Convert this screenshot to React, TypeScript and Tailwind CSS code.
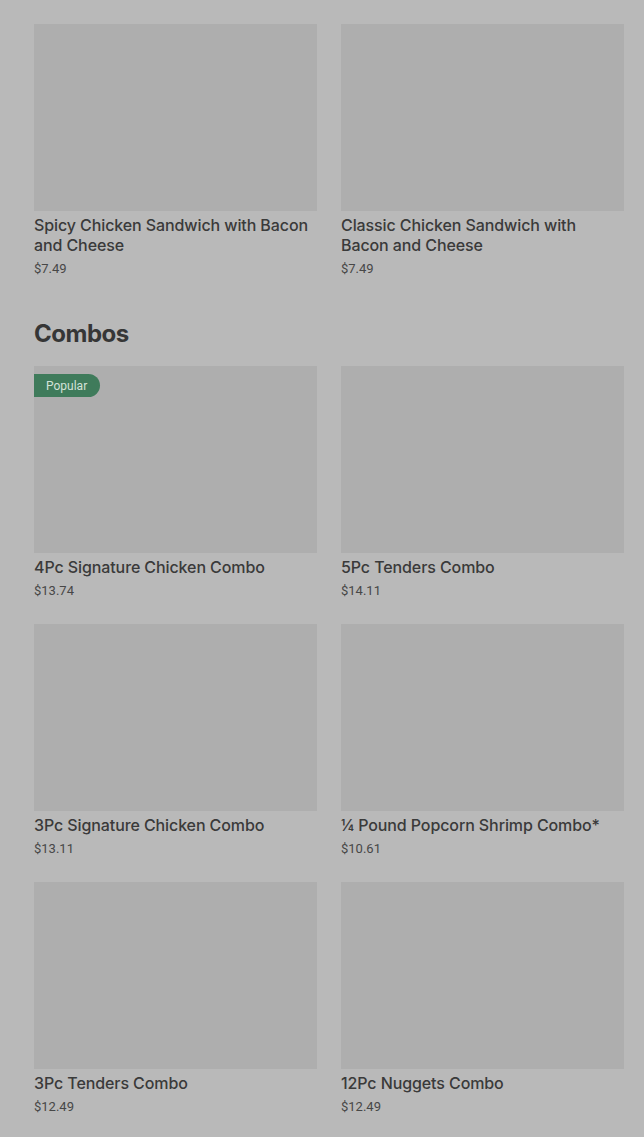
import React from 'react';

interface Item {
  name: string;
  price: string;
  popular?: boolean;
}

const sandwiches: Item[] = [
  { name: 'Spicy Chicken Sandwich with Bacon and Cheese', price: '$7.49' },
  { name: 'Classic Chicken Sandwich with Bacon and Cheese', price: '$7.49' },
];

const combos: Item[] = [
  { name: '4Pc Signature Chicken Combo', price: '$13.74', popular: true },
  { name: '5Pc Tenders Combo', price: '$14.11' },
  { name: '3Pc Signature Chicken Combo', price: '$13.11' },
  { name: '¼ Pound Popcorn Shrimp Combo*', price: '$10.61' },
  { name: '3Pc Tenders Combo', price: '$12.49' },
  { name: '12Pc Nuggets Combo', price: '$12.49' },
];

const MenuCard: React.FC<{ item: Item }> = ({ item }) => (
  <div className="flex flex-col">
    <div className="relative h-[187px] w-full bg-[#aeaeae]">
      {item.popular && (
        <span className="absolute left-0 top-[8px] h-[23px] flex items-center pl-[12px] pr-[13px] rounded-r-full bg-[#3f7b5b] text-[12px] text-[#d3e2d9]">
          Popular
        </span>
      )}
    </div>
    <p
      className="mt-[4px] text-[16px] leading-5 font-medium tracking-[-0.1px] text-[#3a3a3a]"
      style={{ fontFamily: 'Inter, "Liberation Sans", sans-serif' }}
    >
      {item.name}
    </p>
    <p className="mt-[5px] text-[13px] leading-[18px] text-[#474747]">{item.price}</p>
  </div>
);

export default function App() {
  return (
    <div
      className="min-h-screen w-full bg-[#b9b9b9] pl-[34px] pr-[20px] pt-[24px] pb-10"
      style={{ fontFamily: 'Roboto, "Liberation Sans", sans-serif' }}
    >
      <div className="grid grid-cols-2 gap-x-[24px] gap-y-[24px]">
        {sandwiches.map((item, i) => (
          <MenuCard key={i} item={item} />
        ))}
      </div>

      <h2
        className="mt-[40px] mb-[16px] text-[24px] leading-8 font-bold text-[#363636] tracking-[-0.5px]"
        style={{ fontFamily: 'Inter, "Liberation Sans", sans-serif' }}
      >
        Combos
      </h2>

      <div className="grid grid-cols-2 gap-x-[24px] gap-y-[24px]">
        {combos.map((item, i) => (
          <MenuCard key={i} item={item} />
        ))}
      </div>
    </div>
  );
}
